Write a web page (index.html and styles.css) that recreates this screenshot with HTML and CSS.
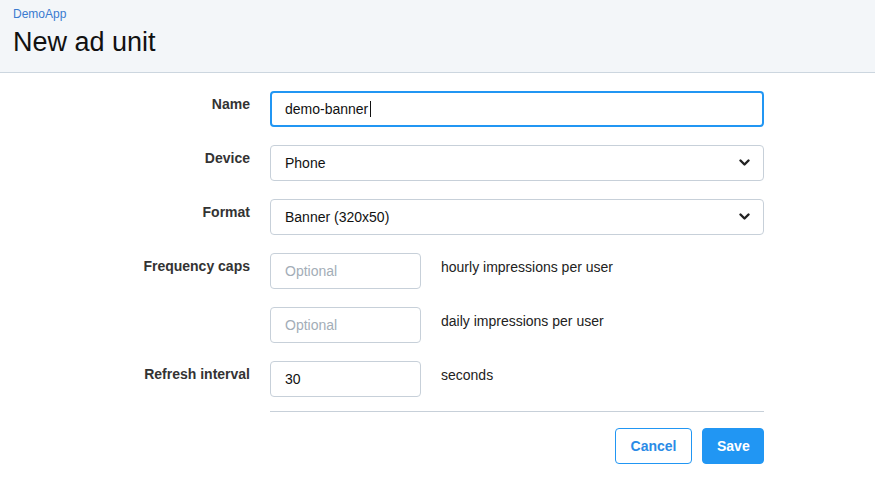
FILE: index.html
```html
<!DOCTYPE html>
<html>
<head>
<meta charset="utf-8">
<link rel="stylesheet" href="styles.css">
</head>
<body>
<header class="page-header">
  <a class="crumb" href="#">DemoApp</a>
  <h1 class="title">New ad unit</h1>
</header>
<form class="form">
  <label class="label">Name</label>
  <div class="field"><input class="input focused" type="text" value="demo-banner"><span class="caret"></span></div>

  <label class="label">Device</label>
  <div class="field select-wrap">
    <select class="input select"><option>Phone</option></select>
    <svg class="chevron" width="11" height="8" viewBox="0 0 11 8"><path d="M1.5 1.5 L5.5 5.5 L9.5 1.5" fill="none" stroke="#222" stroke-width="2.4" stroke-linecap="round" stroke-linejoin="round"/></svg>
  </div>

  <label class="label">Format</label>
  <div class="field select-wrap">
    <select class="input select"><option>Banner (320x50)</option></select>
    <svg class="chevron" width="11" height="8" viewBox="0 0 11 8"><path d="M1.5 1.5 L5.5 5.5 L9.5 1.5" fill="none" stroke="#222" stroke-width="2.4" stroke-linecap="round" stroke-linejoin="round"/></svg>
  </div>

  <label class="label">Frequency caps</label>
  <div class="field inline">
    <input class="input small" type="text" placeholder="Optional">
    <span class="hint">hourly impressions per user</span>
  </div>

  <span class="label"></span>
  <div class="field inline">
    <input class="input small" type="text" placeholder="Optional">
    <span class="hint">daily impressions per user</span>
  </div>

  <label class="label">Refresh interval</label>
  <div class="field inline">
    <input class="input small" type="text" value="30">
    <span class="hint">seconds</span>
  </div>

  <span class="label"></span>
  <div class="actions">
    <button type="button" class="btn btn-outline">Cancel</button>
    <button type="button" class="btn btn-primary">Save</button>
  </div>
</form>
</body>
</html>
```
FILE: styles.css
```css
* { box-sizing: border-box; }
body {
  margin: 0;
  font-family: "Liberation Sans", Arial, sans-serif;
  color: #222;
  background: #fff;
}
.page-header {
  background: #f3f6f9;
  border-bottom: 1px solid #ccd6df;
  height: 73px;
  padding: 7px 13px 0;
}
.crumb {
  display: block;
  font-size: 12px;
  line-height: 14px;
  color: #3a7bd0;
  text-decoration: none;
}
.title {
  margin: 5px 0 0;
  font-size: 27px;
  line-height: 32px;
  font-weight: normal;
  color: #111;
}
.form {
  display: grid;
  grid-template-columns: 250px 494px;
  column-gap: 20px;
  row-gap: 18px;
  padding-top: 18px;
}
.label {
  text-align: right;
  font-size: 14px;
  font-weight: bold;
  line-height: 16px;
  padding-top: 5px;
  color: #333;
}
.field { position: relative; }
.input {
  display: block;
  width: 100%;
  height: 36px;
  border: 1px solid #c7d0d9;
  border-radius: 4px;
  padding: 0 14px;
  font-family: "Liberation Sans", Arial, sans-serif;
  font-size: 14px;
  color: #111;
  background: #fff;
  outline: none;
}
.input::placeholder { color: #a3adb7; }
.input.focused {
  border: 2px solid #2196f3;
  padding: 0 13px;
}
.caret {
  position: absolute;
  left: 100px;
  top: 10px;
  width: 1px;
  height: 16px;
  background: #111;
}
.select {
  appearance: none;
  -webkit-appearance: none;
  padding-right: 36px;
}
.chevron {
  position: absolute;
  right: 14px;
  top: 14px;
  pointer-events: none;
}
.inline {
  display: flex;
  align-items: flex-start;
  gap: 20px;
}
.input.small { width: 151px; flex: none; }
.hint {
  font-size: 14px;
  line-height: 16px;
  padding-top: 6px;
  color: #222;
}
.actions {
  border-top: 1px solid #c7d0d9;
  margin-top: -4px;
  padding-top: 16px;
  display: flex;
  justify-content: flex-end;
  gap: 10px;
}
.btn {
  height: 36px;
  border-radius: 4px;
  font-family: "Liberation Sans", Arial, sans-serif;
  font-size: 14px;
  font-weight: bold;
  padding: 0 14px;
  cursor: pointer;
}
.btn-outline {
  background: #fff;
  border: 1px solid #2196f3;
  color: #2a8be6;
  width: 77px;
}
.btn-primary {
  background: #2196f3;
  border: 1px solid #2196f3;
  color: #fff;
  width: 62px;
}
```
